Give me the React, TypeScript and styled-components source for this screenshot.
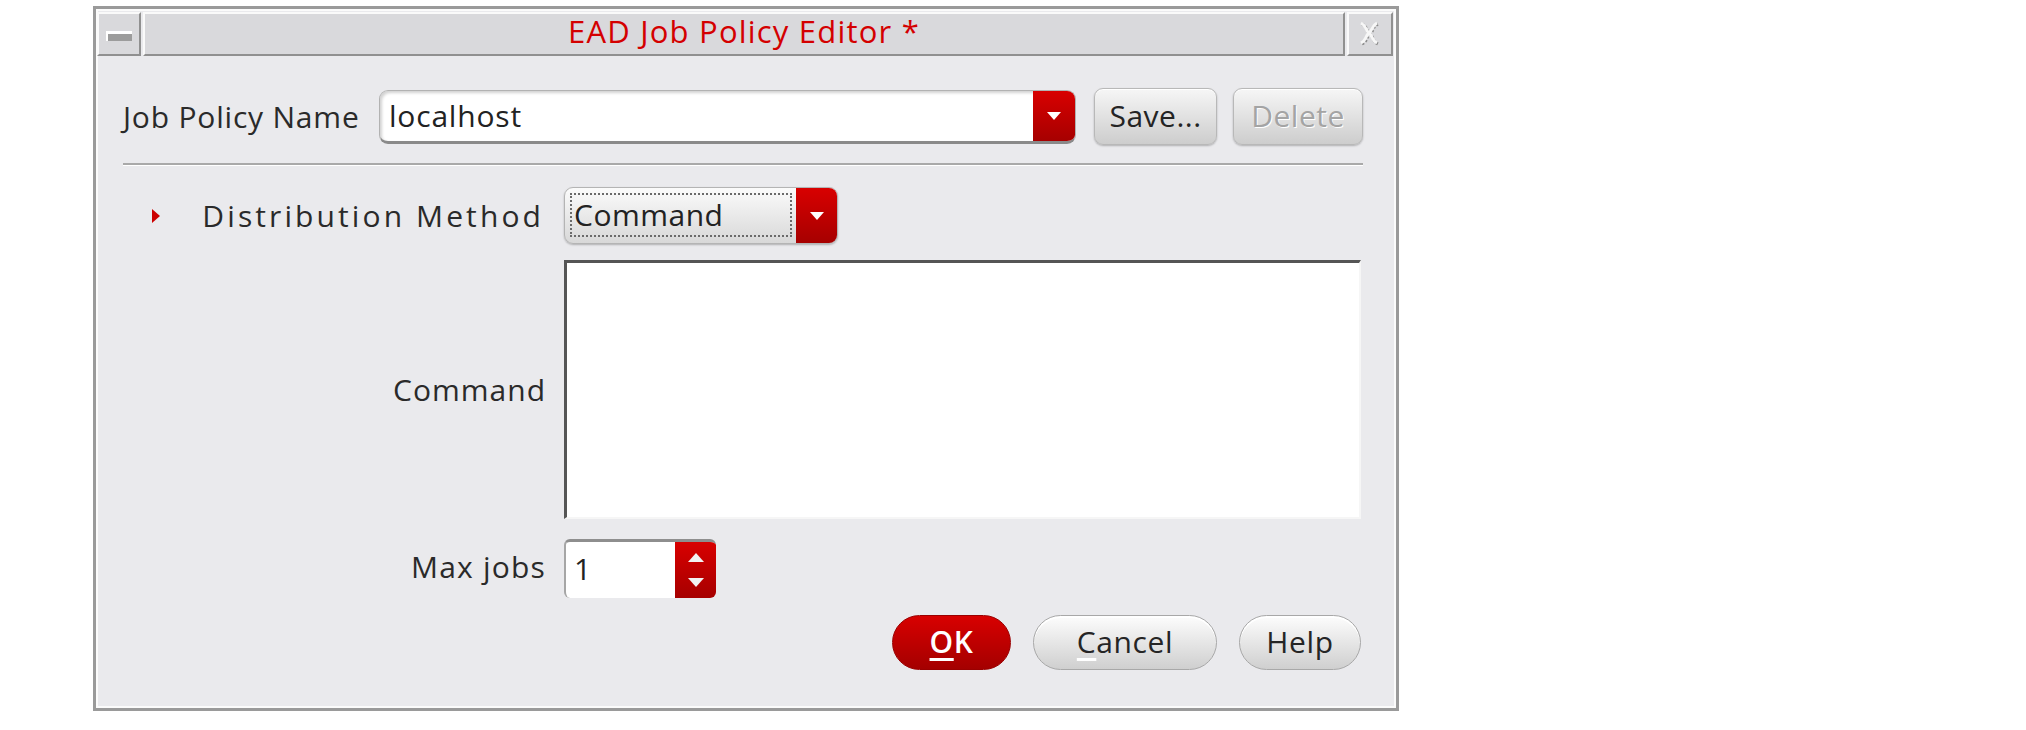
import React from 'react';
import styled, { createGlobalStyle, css } from 'styled-components';

const GlobalStyle = createGlobalStyle`
  html, body {
    margin: 0;
    padding: 0;
    background: #ffffff;
  }
  body {
    font-family: "Open Sans", "DejaVu Sans", sans-serif;
    color: #222;
  }
`;

const Page = styled.div`
  width: 2026px;
  height: 730px;
  box-sizing: border-box;
  padding: 6px 0 0 93px;
`;

const Dialog = styled.div`
  width: 1306px;
  height: 705px;
  box-sizing: border-box;
  border: 3px solid #9a9a9a;
  background: #eaeaed;
  box-shadow: inset 0 0 0 2px #fbfbfb;
  padding: 3px 3px 0 1px;
  display: flex;
  flex-direction: column;
`;

/* ---------- title bar ---------- */

const TitleBar = styled.div`
  display: flex;
  gap: 2px;
  height: 44px;
`;

const bevel = css`
  box-sizing: border-box;
  background: #d9d9dc;
  border-top: 2px solid #fafafa;
  border-left: 2px solid #fafafa;
  border-bottom: 2px solid #909090;
  border-right: 2px solid #909090;
`;

const TitleButton = styled.div<{ $w: number }>`
  ${bevel};
  width: ${(p) => p.$w}px;
  display: flex;
  align-items: center;
  justify-content: center;
`;

const TitleText = styled.div`
  ${bevel};
  flex: 1;
  display: flex;
  align-items: center;
  justify-content: center;
  color: #d40000;
  font-size: 31px;
  letter-spacing: 1.2px;
  padding-bottom: 6px;
`;

const MinGlyph = styled.div`
  width: 26px;
  height: 10px;
  box-sizing: border-box;
  border-top: 3px solid #ffffff;
  border-left: 2px solid #ffffff;
  background: #9c9c9c;
  margin-top: 4px;
`;

/* ---------- body ---------- */

const Content = styled.div`
  flex: 1;
  display: flex;
  flex-direction: column;
  padding: 0 30px 0 26px;
`;

const NameRow = styled.div`
  display: flex;
  align-items: center;
  margin-top: 32px;
  height: 57px;
`;

const Label = styled.div<{ $spacing?: number }>`
  font-size: 30px;
  letter-spacing: ${(p) => p.$spacing ?? 0.8}px;
  color: #2a2a2a;
  white-space: nowrap;
`;

const NameLabel = styled(Label)`
  width: 256px;
`;

const Combo = styled.div`
  display: flex;
  width: 697px;
  height: 54px;
  box-sizing: border-box;
  border-radius: 9px;
  overflow: hidden;
  border: 1px solid #b2b2b2;
  border-bottom: 3px solid #8a8a8a;
  background: #ffffff;
  box-shadow: inset 2px 2px 3px rgba(0, 0, 0, 0.18);
  margin-right: 18px;
`;

const FieldText = styled.div`
  flex: 1;
  display: flex;
  align-items: center;
  padding-left: 9px;
  font-size: 30px;
  letter-spacing: 0.8px;
  color: #222;
`;

const RedCap = styled.div<{ $w?: number }>`
  width: ${(p) => p.$w ?? 42}px;
  background: linear-gradient(#d80000, #a60000);
  display: flex;
  flex-direction: column;
  align-items: center;
  justify-content: center;
  gap: 14px;
`;

const RectButton = styled.div<{ $w: number; $disabled?: boolean }>`
  width: ${(p) => p.$w}px;
  height: 57px;
  box-sizing: border-box;
  border-radius: 9px;
  border: 1px solid #b8b8b8;
  background: linear-gradient(#f6f6f6, #cdcdcd);
  box-shadow: 0 1px 2px rgba(0, 0, 0, 0.25), inset 0 1px 0 #ffffff;
  display: flex;
  align-items: center;
  justify-content: center;
  font-size: 30px;
  letter-spacing: 0.5px;
  color: ${(p) => (p.$disabled ? '#a4a4a4' : '#242424')};
  text-shadow: ${(p) => (p.$disabled ? '1px 1px 0 #ffffff' : 'none')};
  padding-bottom: 2px;
`;

const Separator = styled.div`
  margin-top: 18px;
  height: 2px;
  background: #a9a9a9;
  border-bottom: 1px solid #ffffff;
`;

const Form = styled.div`
  display: grid;
  grid-template-columns: 423px 1fr;
  column-gap: 18px;
  row-gap: 16px;
  margin-top: 21px;
`;

const LabelCell = styled.div`
  display: flex;
  align-items: center;
  justify-content: flex-end;
`;

const ExpanderCell = styled(LabelCell)`
  justify-content: space-between;
  padding-left: 28px;
  padding-right: 2px;
`;

const Dropdown = styled.div`
  display: flex;
  width: 274px;
  height: 57px;
  box-sizing: border-box;
  border-radius: 9px;
  overflow: hidden;
  border: 1px solid #b4b4b4;
  background: linear-gradient(#fbfbfb, #d8d8d8);
  box-shadow: 0 1px 2px rgba(0, 0, 0, 0.25);
`;

const DropdownFace = styled.div`
  flex: 1;
  display: flex;
  padding: 5px 4px 6px 5px;
`;

const FocusRing = styled.div`
  flex: 1;
  display: flex;
  align-items: center;
  border: 2px dotted #6a6a6a;
  padding-left: 2px;
  padding-bottom: 2px;
  font-size: 30px;
  letter-spacing: 0.5px;
  color: #222;
`;

const TextArea = styled.div`
  width: 797px;
  height: 259px;
  box-sizing: border-box;
  background: #ffffff;
  border-top: 3px solid #555555;
  border-left: 3px solid #555555;
  border-right: 2px solid #f6f6f6;
  border-bottom: 2px solid #f6f6f6;
`;

const SpinBox = styled.div`
  display: flex;
  width: 152px;
  height: 59px;
  box-sizing: border-box;
  border-radius: 6px;
  overflow: hidden;
  border-top: 3px solid #8e8e8e;
  border-left: 2px solid #a6a6a6;
  background: #ffffff;
  margin-top: 4px;
`;

const SpinText = styled(FieldText)`
  padding-left: 8px;
  padding-bottom: 4px;
`;

const ButtonRow = styled.div`
  display: flex;
  justify-content: flex-end;
  gap: 22px;
  margin-top: 17px;
  margin-right: 2px;
`;

const PillButton = styled.div<{ $w: number; $primary?: boolean }>`
  width: ${(p) => p.$w}px;
  height: 55px;
  box-sizing: border-box;
  border-radius: 28px;
  display: flex;
  align-items: center;
  justify-content: center;
  font-size: 30px;
  letter-spacing: 0.6px;
  padding-bottom: 3px;
  ${(p) =>
    p.$primary
      ? css`
          background: linear-gradient(#d80000, #a40000);
          border: 1px solid #9a0000;
          color: #ffffff;
          font-weight: 600;
        `
      : css`
          background: linear-gradient(#fdfdfd, #cfcfcf);
          border: 1px solid #a8a8a8;
          color: #252525;
          box-shadow: inset 0 2px 0 #ffffff;
        `}
`;

const Mnemonic = styled.span`
  text-decoration: underline;
  text-decoration-color: #ffffff;
  text-decoration-thickness: 3px;
  text-underline-offset: 5px;
`;

const DownArrow = () => (
  <svg width="16" height="10" viewBox="0 0 16 10">
    <polygon points="1,1 15,1 8,9" fill="#ffffff" />
  </svg>
);

const SpinArrow = ({ up }: { up?: boolean }) => (
  <svg width="16" height="10" viewBox="0 0 16 10">
    <polygon points={up ? '8,0 16,9 0,9' : '0,1 16,1 8,10'} fill="#f2f2f2" />
  </svg>
);

const Expander = () => (
  <svg width="10" height="16" viewBox="0 0 10 16">
    <polygon points="1,1 9,8 1,15" fill="#cc0000" />
  </svg>
);

const CloseGlyph = () => (
  <svg width="28" height="26" viewBox="0 0 28 26">
    <path
      d="M6 3 C12 6 10 10 14 13 C18 10 16 6 22 3 M6 23 C12 20 10 16 14 13 C18 16 16 20 22 23"
      fill="none"
      stroke="#8a8a8a"
      strokeWidth="3"
      strokeDasharray="2 2"
    />
    <path
      d="M5 2 C11 5 9 9 13 12 C17 9 15 5 21 2 M5 22 C11 19 9 15 13 12 C17 15 15 19 21 22"
      fill="none"
      stroke="#f7f7f7"
      strokeWidth="3"
    />
  </svg>
);

const App: React.FC = () => {
  return (
    <>
      <GlobalStyle />
      <Page>
        <Dialog>
          <TitleBar>
            <TitleButton $w={44}>
              <MinGlyph />
            </TitleButton>
            <TitleText>EAD Job Policy Editor *</TitleText>
            <TitleButton $w={46}>
              <CloseGlyph />
            </TitleButton>
          </TitleBar>

          <Content>
            <NameRow>
              <NameLabel>Job Policy Name</NameLabel>
              <Combo>
                <FieldText>localhost</FieldText>
                <RedCap>
                  <DownArrow />
                </RedCap>
              </Combo>
              <RectButton $w={123} style={{ marginRight: 16 }}>
                Save...
              </RectButton>
              <RectButton $w={130} $disabled>
                Delete
              </RectButton>
            </NameRow>

            <Separator />

            <Form>
              <ExpanderCell>
                <Expander />
                <Label $spacing={3.1}>Distribution Method</Label>
              </ExpanderCell>
              <Dropdown>
                <DropdownFace>
                  <FocusRing>Command</FocusRing>
                </DropdownFace>
                <RedCap $w={41}>
                  <DownArrow />
                </RedCap>
              </Dropdown>

              <LabelCell>
                <Label $spacing={1}>Command</Label>
              </LabelCell>
              <TextArea />

              <LabelCell>
                <Label $spacing={1.2}>Max jobs</Label>
              </LabelCell>
              <SpinBox>
                <SpinText>1</SpinText>
                <RedCap $w={41}>
                  <SpinArrow up />
                  <SpinArrow />
                </RedCap>
              </SpinBox>
            </Form>

            <ButtonRow>
              <PillButton $w={119} $primary>
                <Mnemonic>O</Mnemonic>K
              </PillButton>
              <PillButton $w={184}>
                <Mnemonic>C</Mnemonic>ancel
              </PillButton>
              <PillButton $w={122}>Help</PillButton>
            </ButtonRow>
          </Content>
        </Dialog>
      </Page>
    </>
  );
};

export default App;
